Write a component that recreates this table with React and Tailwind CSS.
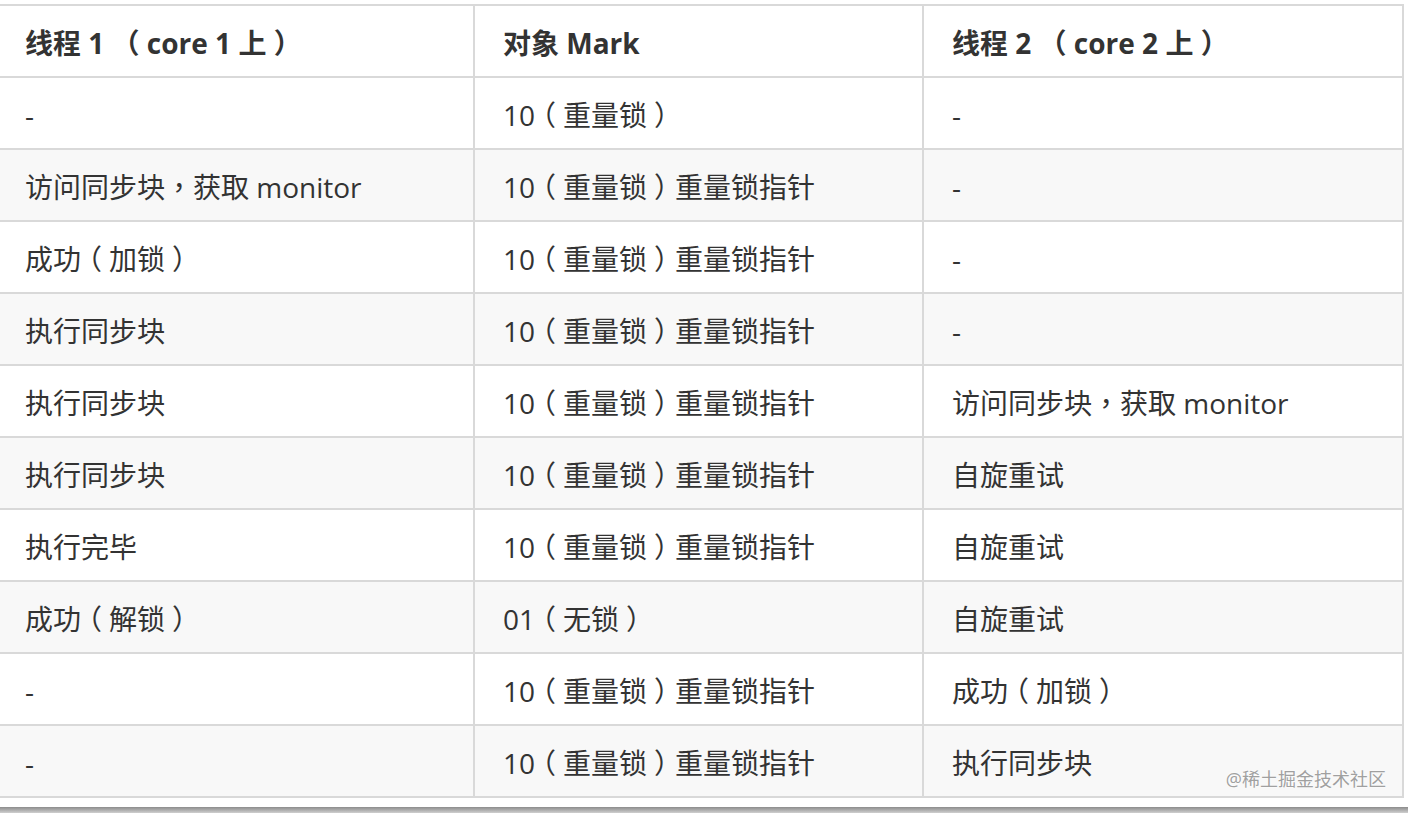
const header = ['线程 1 （ core 1 上 ）', '对象 Mark', '线程 2 （ core 2 上 ）']

const rows = [
  ['-', '10（重量锁）', '-'],
  ['访问同步块，获取 monitor', '10（重量锁）重量锁指针', '-'],
  ['成功（加锁）', '10（重量锁）重量锁指针', '-'],
  ['执行同步块', '10（重量锁）重量锁指针', '-'],
  ['执行同步块', '10（重量锁）重量锁指针', '访问同步块，获取 monitor'],
  ['执行同步块', '10（重量锁）重量锁指针', '自旋重试'],
  ['执行完毕', '10（重量锁）重量锁指针', '自旋重试'],
  ['成功（解锁）', '01（无锁）', '自旋重试'],
  ['-', '10（重量锁）重量锁指针', '成功（加锁）'],
  ['-', '10（重量锁）重量锁指针', '执行同步块'],
]

// TC 字形让全角逗号居中，和截图一致
const font = { fontFamily: '"Open Sans", "Noto Sans CJK TC", "Noto Sans CJK SC", sans-serif' }

// 正文里的全角括号是居中的：用半宽字形 + 两侧留白
const CellText = ({ text }) =>
  text.split(/([（）])/).map((part, i) =>
    part === '（' || part === '）' ? (
      <span key={i} className="inline-block px-[7px] [font-feature-settings:'halt']">
        {part}
      </span>
    ) : (
      <span key={i}>{part}</span>
    )
  )

const Row = ({ cells, bold, shaded }) => (
  <div
    className={`grid grid-cols-[475px_449px_1fr] h-[72px] border-b-2 border-[#d9d9d9] ${shaded ? 'bg-[#f8f8f8]' : 'bg-white'}`}
  >
    {cells.map((c, i) => (
      <div
        key={i}
        className={`flex items-center pt-[3px] text-[28px] text-[#333] ${i < 2 ? 'border-r-2 border-[#d9d9d9]' : ''} ${i === 0 ? 'pl-[25px]' : 'pl-[28px]'} ${bold ? 'font-bold' : ''}`}
      >
        <span className="whitespace-pre">{bold ? c : <CellText text={c} />}</span>
      </div>
    ))}
  </div>
)

export default function App() {
  return (
    <div className="relative w-[1408px] h-[813px] bg-white overflow-hidden flex flex-col" style={font}>
      <div className="pt-[4px]">
        <div className="w-[1404px] border-t-2 border-r-2 border-[#d9d9d9]">
          <Row cells={header} bold />
          {rows.map((r, i) => (
            <Row key={i} cells={r} shaded={i % 2 === 1} />
          ))}
        </div>
      </div>
      <div className="mt-auto h-[6px] bg-gradient-to-b from-[#8c8c8c] to-[#cfcfcf]" />
      <div
        className="absolute right-[22px] top-[766px] text-[18px] text-[#a0a0a0]"
        style={{ textShadow: '0 0 2px #fff, 0 0 2px #fff' }}
      >
        @稀土掘金技术社区
      </div>
    </div>
  )
}
